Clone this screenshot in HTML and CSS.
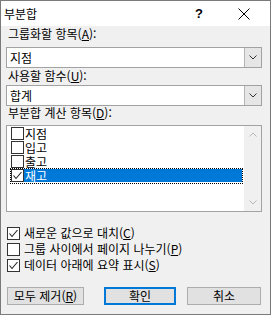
FILE: index.html
```html
<!DOCTYPE html>
<html lang="ko">
<head>
<meta charset="utf-8">
<title>부분합</title>
<link rel="stylesheet" href="styles.css">
</head>
<body>
<div class="window">
  <div class="titlebar">
    <span class="title">부분합</span>
    <span class="help">?</span>
    <span class="close"><svg width="12" height="12" viewBox="0 0 12 12"><path d="M0.5 0.5L11.5 11.5M11.5 0.5L0.5 11.5" stroke="#000" stroke-width="1" fill="none"/></svg></span>
  </div>
  <div class="content">
    <div class="label l1">그룹화할 항목(<u>A</u>):</div>
    <div class="combo c1">
      <span class="value">지점</span>
      <span class="drop"><svg width="8" height="5" viewBox="0 0 8 5"><path d="M0.5 0.5L4 4L7.5 0.5" stroke="#333" stroke-width="1" fill="none"/></svg></span>
    </div>
    <div class="label l2">사용할 함수(<u>U</u>):</div>
    <div class="combo c2">
      <span class="value">합계</span>
      <span class="drop"><svg width="8" height="5" viewBox="0 0 8 5"><path d="M0.5 0.5L4 4L7.5 0.5" stroke="#333" stroke-width="1" fill="none"/></svg></span>
    </div>
    <div class="label l3">부분합 계산 항목(<u>D</u>):</div>
    <div class="listbox">
      <div class="rows">
        <div class="row"><span class="cb"></span><span class="txt">지점</span></div>
        <div class="row"><span class="cb"></span><span class="txt">입고</span></div>
        <div class="row"><span class="cb"></span><span class="txt">출고</span></div>
        <div class="row sel"><span class="cb"><svg width="11" height="11" viewBox="0 0 11 11"><path d="M1.5 5.5L4 8.5L9.5 2" stroke="#222" stroke-width="1.1" fill="none"/></svg></span><span class="txt">재고</span></div>
      </div>
      <div class="scroll">
        <span class="arrow"><svg width="8" height="5" viewBox="0 0 8 5"><path d="M0.5 4.5L4 1L7.5 4.5" stroke="#b8b8b8" stroke-width="1" fill="none"/></svg></span>
        <span class="arrow"><svg width="8" height="5" viewBox="0 0 8 5"><path d="M0.5 0.5L4 4L7.5 0.5" stroke="#b8b8b8" stroke-width="1" fill="none"/></svg></span>
      </div>
    </div>
    <div class="options">
      <div class="opt"><span class="cb"><svg width="11" height="11" viewBox="0 0 11 11"><path d="M1.5 5.5L4 8.5L9.5 2" stroke="#222" stroke-width="1.1" fill="none"/></svg></span><span>새로운 값으로 대치(<u>C</u>)</span></div>
      <div class="opt"><span class="cb"></span><span>그룹 사이에서 페이지 나누기(<u>P</u>)</span></div>
      <div class="opt"><span class="cb"><svg width="11" height="11" viewBox="0 0 11 11"><path d="M1.5 5.5L4 8.5L9.5 2" stroke="#222" stroke-width="1.1" fill="none"/></svg></span><span>데이터 아래에 요약 표시(<u>S</u>)</span></div>
    </div>
    <div class="buttons">
      <button class="btn b1">모두 제거(<u>R</u>)</button>
      <button class="btn b2 default">확인</button>
      <button class="btn b3">취소</button>
    </div>
  </div>
</div>
</body>
</html>
```

FILE: styles.css
```css
* { box-sizing: border-box; }
html, body { margin: 0; padding: 0; }
body {
  font-family: "Noto Sans CJK KR", "Noto Sans", sans-serif;
  font-size: 12px;
  color: #000;
  background: #f0f0f0;
}
.window {
  width: 271px;
  height: 315px;
  border: 1px solid #7a7a7a;
  background: #f0f0f0;
  display: flex;
  flex-direction: column;
}
.titlebar {
  height: 25px;
  background: #fff;
  display: flex;
  align-items: center;
  padding: 0 20px 0 3px;
  line-height: 16px;
}
.title { flex: 1; }
.help {
  font-weight: bold;
  font-size: 13px;
  font-family: "Liberation Sans", sans-serif;
  margin-right: 35px;
}
.close { display: flex; width: 12px; height: 12px; }
.content {
  padding: 0 8px 0 5px;
  display: flex;
  flex-direction: column;
}
.label {
  line-height: 16px;
  height: 16px;
  padding-left: 2px;
  white-space: nowrap;
}
.l1 { margin-top: 0; }
.l3 { margin-top: -1px; }
.combo {
  height: 21px;
  border: 1px solid #a2a2a2;
  background: #fff;
  display: flex;
  align-items: stretch;
}
.c1 { margin-top: 5px; }
.c2 { margin-top: 1px; }
.value {
  flex: 1;
  padding-left: 3px;
  line-height: 19px;
}
.drop {
  width: 17px;
  background: #e6e6e6;
  border-left: 1px solid #b4b4b4;
  display: flex;
  align-items: center;
  justify-content: center;
}
.listbox {
  margin-top: 4px;
  height: 87px;
  border: 1px solid #a2a2a2;
  background: #fff;
  display: flex;
}
.rows {
  flex: 1;
  padding: 1px 2px 0 4px;
  display: flex;
  flex-direction: column;
}
.row {
  height: 14px;
  display: flex;
  align-items: flex-start;
  line-height: 14px;
}
.cb {
  width: 13px;
  height: 13px;
  border: 1px solid #333;
  background: #fff;
  display: flex;
  align-items: center;
  justify-content: center;
  flex: none;
}
.txt {
  flex: 1;
  padding-left: 1px;
  height: 13px;
}
.row.sel { outline: 1px dotted #000; }
.row.sel .txt { background: #0078d7; color: #fff; }
.scroll {
  width: 17px;
  background: #f0f0f0;
  display: flex;
  flex-direction: column;
  justify-content: space-between;
}
.arrow {
  height: 17px;
  display: flex;
  align-items: center;
  justify-content: center;
}
.options {
  margin-top: 13px;
  display: flex;
  flex-direction: column;
}
.opt {
  height: 16px;
  display: flex;
  align-items: center;
  gap: 4px;
  margin-left: 1px;
  line-height: 16px;
  white-space: nowrap;
}
.buttons {
  margin-top: 14px;
  display: flex;
  padding-left: 1px;
}
.btn {
  font-family: inherit;
  font-size: 12px;
  height: 18px;
  padding: 0;
  line-height: 16px;
  background: #e1e1e1;
  border: 1px solid #adadad;
  color: #000;
}
.b1 { width: 77px; }
.b2 { width: 72px; margin-left: 20px; }
.b3 { width: 74px; margin-left: 11px; }
.btn.default {
  border-color: #0078d7;
  box-shadow: inset 0 0 0 1px #0078d7;
}
```
